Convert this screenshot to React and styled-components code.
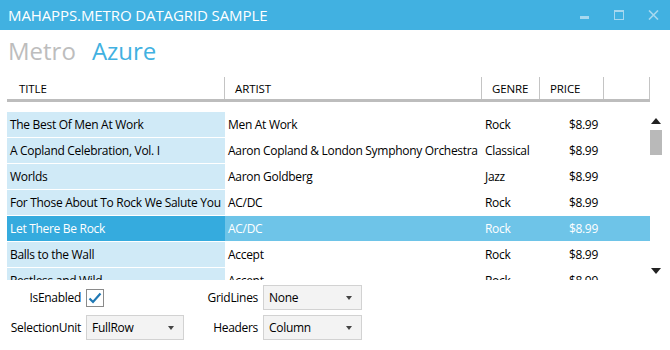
import React from 'react';
import styled, { createGlobalStyle } from 'styled-components';

const accent = '#41b1e1';

const GlobalStyle = createGlobalStyle`
  html, body {
    margin: 0;
    padding: 0;
    background: #fff;
  }
  body {
    width: 670px;
    height: 350px;
    overflow: hidden;
    font-family: "Open Sans", "Noto Sans", sans-serif;
    color: #000;
  }
`;

const Window = styled.div`
  width: 670px;
  height: 350px;
  display: flex;
  flex-direction: column;
`;

const TitleBar = styled.div`
  height: 30px;
  background: ${accent};
  display: flex;
  align-items: center;
  padding-left: 8px;
`;

const TitleText = styled.div`
  flex: 1;
  color: #fff;
  font-size: 15px;
  letter-spacing: -0.1px;
`;

const WinButtons = styled.div`
  display: flex;
  align-items: center;
  height: 100%;
`;

const WinButton = styled.div`
  width: 34px;
  height: 30px;
  display: flex;
  align-items: center;
  justify-content: center;
  svg { display: block; }
`;

const Heading = styled.div`
  height: 46px;
  display: flex;
  align-items: flex-start;
  padding: 6px 0 0 8px;
  box-sizing: border-box;
  font-size: 24px;
  line-height: 30px;
  gap: 16px;
`;

const HeadWord = styled.span`
  color: ${p => p.$color};
`;

const cols = '218px 257px 58px 64px 46px';

const Grid = styled.div`
  margin-left: 7px;
  width: 655px;
`;

const HeaderRow = styled.div`
  display: grid;
  grid-template-columns: ${cols};
  width: 643px;
  height: 23px;
  border-bottom: 3px solid #bdbdbd;
`;

const HeaderCell = styled.div`
  border-right: 1px solid #c4c4c4;
  font-size: 11.5px;
  display: flex;
  align-items: center;
  padding-left: ${p => (p.$first ? 12 : 10)}px;
  margin-top: 1px;
  letter-spacing: -0.1px;
`;

const Body = styled.div`
  display: flex;
  margin-top: 10px;
  height: 168px;
`;

const Rows = styled.div`
  width: 643px;
  height: 168px;
  overflow: hidden;
  display: flex;
  flex-direction: column;
  gap: 1px;
`;

const Row = styled.div`
  display: grid;
  grid-template-columns: ${cols};
  height: 25px;
  flex-shrink: 0;
  background: ${p => (p.$selected ? '#6ec4e8' : 'transparent')};
  color: ${p => (p.$selected ? '#fff' : '#000')};
`;

const Cell = styled.div`
  font-size: 12px;
  letter-spacing: -0.3px;
  display: flex;
  align-items: center;
  white-space: nowrap;
  overflow: hidden;
  padding-left: 3px;
  justify-content: ${p => (p.$right ? 'flex-end' : 'flex-start')};
  padding-right: ${p => (p.$right ? 6 : 0)}px;
`;

const TitleCell = styled(Cell)`
  background: ${p => (p.$selected ? '#35abde' : '#d0eaf7')};
`;

const ScrollBar = styled.div`
  width: 12px;
  display: flex;
  flex-direction: column;
  align-items: center;
`;

const ArrowBox = styled.div`
  height: 18px;
  display: flex;
  align-items: center;
  justify-content: center;
`;

const Thumb = styled.div`
  width: 12px;
  height: 25px;
  background: #b9b9b9;
`;

const Track = styled.div`
  flex: 1;
`;

const Controls = styled.div`
  display: grid;
  grid-template-columns: 82px 98px 71px 99px;
  grid-auto-rows: 25px;
  column-gap: 4px;
  row-gap: 5px;
  margin-top: 5px;
  align-items: center;
`;

const Label = styled.div`
  font-size: 12px;
  text-align: right;
  letter-spacing: -0.3px;
  padding-right: 1px;
`;

const CheckBox = styled.div`
  width: 16px;
  height: 16px;
  border: 1px solid #8a8a8a;
  background: #fff;
  display: flex;
  align-items: center;
  justify-content: center;
`;

const Combo = styled.div`
  height: 100%;
  box-sizing: border-box;
  border: 1px solid #d2d2d2;
  background: #f3f3f3;
  display: flex;
  align-items: center;
  justify-content: space-between;
  padding: 0 9px 0 5px;
  font-size: 12px;
  letter-spacing: -0.3px;
`;

const albums = [
  ['The Best Of Men At Work', 'Men At Work', 'Rock'],
  ['A Copland Celebration, Vol. I', 'Aaron Copland & London Symphony Orchestra', 'Classical'],
  ['Worlds', 'Aaron Goldberg', 'Jazz'],
  ['For Those About To Rock We Salute You', 'AC/DC', 'Rock'],
  ['Let There Be Rock', 'AC/DC', 'Rock'],
  ['Balls to the Wall', 'Accept', 'Rock'],
  ['Restless and Wild', 'Accept', 'Rock'],
];

const Caret = ({ up }) => (
  <svg width="10" height="6" viewBox="0 0 10 6">
    <path d={up ? 'M0 6 L5 0 L10 6 Z' : 'M0 0 L10 0 L5 6 Z'} fill="#222" />
  </svg>
);

const SmallCaret = () => (
  <svg width="6" height="4" viewBox="0 0 6 4">
    <path d="M0 0 L6 0 L3 4 Z" fill="#444" />
  </svg>
);

const Select = ({ value }) => (
  <Combo>
    <span>{value}</span>
    <SmallCaret />
  </Combo>
);

export default function App() {
  return (
    <Window>
      <GlobalStyle />
      <TitleBar>
        <TitleText>MAHAPPS.METRO DATAGRID SAMPLE</TitleText>
        <WinButtons>
          <WinButton>
            <svg width="10" height="10" viewBox="0 0 10 10">
              <rect x="0" y="6" width="9" height="3" fill="#a6d8ef" />
            </svg>
          </WinButton>
          <WinButton>
            <svg width="10" height="10" viewBox="0 0 10 10">
              <rect x="0.5" y="0.5" width="9" height="9" fill="none" stroke="#a6d8ef" />
              <rect x="0" y="0" width="10" height="2" fill="#a6d8ef" />
            </svg>
          </WinButton>
          <WinButton>
            <svg width="11" height="10" viewBox="0 0 11 10">
              <path d="M1 0.5 L10 9.5 M10 0.5 L1 9.5" stroke="#a6d8ef" strokeWidth="1.6" />
            </svg>
          </WinButton>
        </WinButtons>
      </TitleBar>

      <Heading>
        <HeadWord $color="#bdbdbd">Metro</HeadWord>
        <HeadWord $color={accent}>Azure</HeadWord>
      </Heading>

      <Grid>
        <HeaderRow>
          <HeaderCell $first>TITLE</HeaderCell>
          <HeaderCell>ARTIST</HeaderCell>
          <HeaderCell>GENRE</HeaderCell>
          <HeaderCell>PRICE</HeaderCell>
          <HeaderCell />
        </HeaderRow>
        <Body>
          <Rows>
            {albums.map(([title, artist, genre], i) => {
              const selected = i === 4;
              return (
                <Row key={title} $selected={selected}>
                  <TitleCell $selected={selected}>{title}</TitleCell>
                  <Cell>{artist}</Cell>
                  <Cell>{genre}</Cell>
                  <Cell $right>$8.99</Cell>
                  <Cell />
                </Row>
              );
            })}
          </Rows>
          <ScrollBar>
            <ArrowBox><Caret up /></ArrowBox>
            <Thumb />
            <Track />
            <ArrowBox><Caret /></ArrowBox>
          </ScrollBar>
        </Body>
      </Grid>

      <Controls>
        <Label>IsEnabled</Label>
        <div>
          <CheckBox>
            <svg width="14" height="12" viewBox="0 0 14 12">
              <path d="M1.5 6.5 L5 10 L12.5 1.5" fill="none" stroke="#1f78b4" strokeWidth="2.2" />
            </svg>
          </CheckBox>
        </div>
        <Label>GridLines</Label>
        <Select value="None" />
        <Label>SelectionUnit</Label>
        <Select value="FullRow" />
        <Label>Headers</Label>
        <Select value="Column" />
      </Controls>
    </Window>
  );
}
